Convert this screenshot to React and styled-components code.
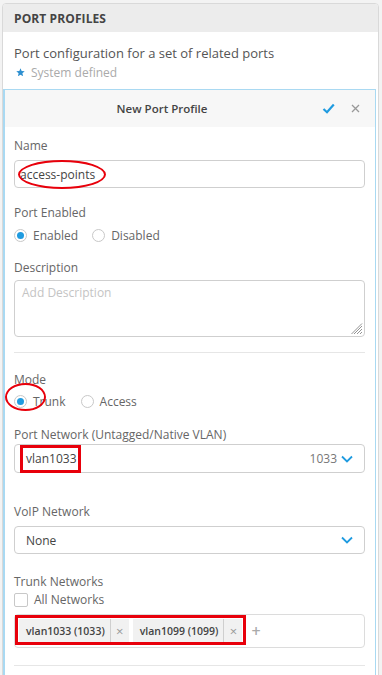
import React from 'react';
import styled, { createGlobalStyle } from 'styled-components';

const Global = createGlobalStyle`
  body {
    margin: 0;
    background: #f3f3f3;
    font-family: 'Open Sans', 'Liberation Sans', sans-serif;
  }
`;

const Frame = styled.div`
  margin: 3px 3px 0 2px;
  height: 672px;
  background: #fff;
  border: 1px solid #d9d9d9;
  border-radius: 4px 4px 0 0;
  overflow: hidden;
  display: flex;
  flex-direction: column;
`;

const Header = styled.div`
  background: #ececec;
  height: 28px;
  display: flex;
  align-items: center;
  padding-left: 11px;
  font-size: 12px;
  font-weight: 700;
  color: #444;
  letter-spacing: 0.1px;
`;

const Intro = styled.div`
  padding: 12px 11px 8px;
  display: flex;
  flex-direction: column;
  gap: 2px;
`;

const IntroText = styled.div`
  font-size: 13px;
  color: #555;
  line-height: 18px;
`;

const SystemNote = styled.div`
  display: flex;
  align-items: center;
  gap: 6px;
  font-size: 12px;
  color: #aaa;
  line-height: 17px;
  padding-left: 2px;
`;

const Panel = styled.div`
  flex: 1;
  margin-right: 2px;
  border: 1px solid #a9d9f2;
  border-bottom: none;
  border-left-width: 2px;
  display: flex;
  flex-direction: column;
`;

const PanelBar = styled.div`
  height: 37px;
  background: #f7f7f7;
  display: flex;
  align-items: center;
`;

const PanelTitle = styled.div`
  flex: 1;
  text-align: center;
  font-size: 11.5px;
  font-weight: 600;
  color: #444;
`;

const BarIcons = styled.div`
  width: 56px;
  display: flex;
  align-items: center;
  gap: 16px;
  padding-left: 3px;
  box-sizing: border-box;
`;

const Form = styled.div`
  padding: 10px 10px 0 9px;
  display: flex;
  flex-direction: column;
`;

const Field = styled.div`
  display: flex;
  flex-direction: column;
  margin-bottom: ${p => p.$mb || 16}px;
`;

const Label = styled.div`
  font-size: 12px;
  color: #666;
  line-height: 17px;
  margin-bottom: ${p => p.$mb || 0}px;
`;

const Box = styled.div`
  position: relative;
  height: ${p => p.$h || 28}px;
  border: 1px solid #cfcfcf;
  border-radius: 4px;
  box-sizing: border-box;
  display: flex;
  align-items: center;
  padding: 0 11px 0 ${p => p.$pl || 5}px;
  font-size: 12px;
  color: #444;
  background: #fff;
`;

const TextArea = styled.div`
  position: relative;
  height: 57px;
  border: 1px solid #cfcfcf;
  border-radius: 4px;
  box-sizing: border-box;
  padding: 3px 7px;
  font-size: 12px;
  color: #c4c4c4;
`;

const Grip = styled.svg`
  position: absolute;
  right: 1px;
  bottom: 1px;
`;

const Value = styled.span`
  position: relative;
  flex: 1;
  line-height: 17px;
`;

const Extra = styled.span`
  color: #777;
  margin-right: 4px;
`;

const RadioRow = styled.div`
  display: flex;
  align-items: center;
  gap: ${p => p.$gap || 14}px;
  height: 18px;
`;

const RadioOption = styled.label`
  position: relative;
  display: flex;
  align-items: center;
  gap: 6px;
  font-size: 12px;
  color: #666;
`;

const RadioDot = styled.span`
  width: 13px;
  height: 13px;
  border-radius: 50%;
  border: 1px solid #c8c8c8;
  box-sizing: border-box;
  display: flex;
  align-items: center;
  justify-content: center;
  background: #fff;
  &::after {
    content: '';
    width: 7px;
    height: 7px;
    border-radius: 50%;
    background: ${p => (p.$on ? '#1f9be0' : 'transparent')};
  }
`;

const Divider = styled.div`
  height: 1px;
  background: #e6e6e6;
  margin: ${p => p.$m || '0'};
`;

const CheckRow = styled.label`
  display: flex;
  align-items: center;
  gap: 6px;
  font-size: 12px;
  line-height: 17px;
  color: #666;
  margin: 1px 0 6px;
`;

const CheckBox = styled.span`
  width: 14px;
  height: 14px;
  border: 1px solid #c8c8c8;
  border-radius: 2px;
  box-sizing: border-box;
  background: #fff;
`;

const TagBox = styled.div`
  height: 34px;
  border: 1px solid #dcdcdc;
  border-radius: 4px;
  box-sizing: border-box;
  display: flex;
  align-items: center;
  padding-left: 4px;
  gap: 4px;
`;

const TagGroup = styled.div`
  position: relative;
  display: flex;
  align-items: center;
  gap: 4px;
`;

const Tag = styled.div`
  display: flex;
  align-items: stretch;
  height: 24px;
  background: #f1f1f1;
  font-size: 10.5px;
  color: #444;
  font-weight: 600;
`;

const TagText = styled.span`
  display: flex;
  align-items: center;
  padding: 0 5px 0 7px;
  border-right: 1px solid #cfcfcf;
`;

const TagX = styled.span`
  display: flex;
  align-items: center;
  justify-content: center;
  width: 18px;
  color: #999;
  font-size: 13px;
  font-weight: 400;
`;

const Plus = styled.span`
  color: #aaa;
  font-size: 16px;
  margin-left: 5px;
  font-weight: 600;
`;

const RedEllipse = styled.span`
  position: absolute;
  box-sizing: border-box;
  border: 2.5px solid #e8000b;
  border-radius: 50%;
  left: ${p => p.$l}px;
  top: ${p => p.$t}px;
  width: ${p => p.$w}px;
  height: ${p => p.$h}px;
  pointer-events: none;
`;

const RedRect = styled.span`
  position: absolute;
  box-sizing: border-box;
  border: 3px solid #e8000b;
  left: ${p => p.$l}px;
  top: ${p => p.$t}px;
  right: ${p => (p.$r !== undefined ? `${p.$r}px` : 'auto')};
  bottom: ${p => (p.$b !== undefined ? `${p.$b}px` : 'auto')};
  width: ${p => (p.$w ? `${p.$w}px` : 'auto')};
  height: ${p => (p.$h ? `${p.$h}px` : 'auto')};
  pointer-events: none;
`;

const Chevron = () => (
  <svg width="12" height="8" viewBox="0 0 12 8">
    <path d="M1 1.5 L6 6.5 L11 1.5" fill="none" stroke="#1f9be0" strokeWidth="1.8" />
  </svg>
);

const Radio = ({ on, children, mark }) => (
  <RadioOption>
    <RadioDot $on={on} />
    {children}
    {mark}
  </RadioOption>
);

const Chip = ({ text }) => (
  <Tag>
    <TagText>{text}</TagText>
    <TagX>×</TagX>
  </Tag>
);

export default function App() {
  return (
    <>
      <Global />
      <Frame>
        <Header>PORT PROFILES</Header>
        <Intro>
          <IntroText>Port configuration for a set of related ports</IntroText>
          <SystemNote>
            <svg width="9" height="9" viewBox="0 0 10 10">
              <path d="M5 0.3 L6.3 3.4 L9.7 3.6 L7.1 5.8 L7.9 9.2 L5 7.4 L2.1 9.2 L2.9 5.8 L0.3 3.6 L3.7 3.4 Z" fill="#2d8fd0" />
            </svg>
            System defined
          </SystemNote>
        </Intro>
        <Panel>
          <PanelBar>
            <PanelTitle>New Port Profile</PanelTitle>
            <BarIcons>
              <svg width="13" height="11" viewBox="0 0 13 11">
                <path d="M1.5 6 L5 9.2 L11.8 1.5" fill="none" stroke="#1f9be0" strokeWidth="2.2" />
              </svg>
              <svg width="9" height="9" viewBox="0 0 9 9">
                <path d="M1 1 L8 8 M8 1 L1 8" stroke="#999" strokeWidth="1.3" />
              </svg>
            </BarIcons>
          </PanelBar>
          <Form>
            <Field $mb={16}>
              <Label $mb={6}>Name</Label>
              <Box>
                <Value>
                  access-points
                  <RedEllipse $l={-2} $t={-6} $w={88} $h={29} />
                </Value>
              </Box>
            </Field>
            <Field $mb={15}>
              <Label $mb={5}>Port Enabled</Label>
              <RadioRow $gap={14}>
                <Radio on>Enabled</Radio>
                <Radio>Disabled</Radio>
              </RadioRow>
            </Field>
            <Field $mb={15}>
              <Label $mb={4}>Description</Label>
              <TextArea>
                Add Description
                <Grip width="12" height="12" viewBox="0 0 12 12">
                  <path d="M11 3 L3 11 M11 6 L6 11 M11 9 L9 11 M11 0.5 L0.5 11" stroke="#888" strokeWidth="0.9" />
                </Grip>
              </TextArea>
            </Field>
            <Divider $m="0 0 18px" />
            <Field $mb={16}>
              <Label $mb={4}>Mode</Label>
              <RadioRow $gap={15}>
                <Radio on mark={<RedEllipse $l={-9} $t={-10} $w={41} $h={28} />}>Trunk</Radio>
                <Radio>Access</Radio>
              </RadioRow>
            </Field>
            <Field $mb={30}>
              <Label $mb={1}>Port Network (Untagged/Native VLAN)</Label>
              <Box $h={29} $pl={11}>
                <Value>
                  vlan1033
                  <RedRect $l={-6} $t={-5} $w={61} $h={28} />
                </Value>
                <Extra>1033</Extra>
                <Chevron />
              </Box>
            </Field>
            <Field $mb={19}>
              <Label $mb={6}>VoIP Network</Label>
              <Box $h={28} $pl={11}>
                <Value>None</Value>
                <Chevron />
              </Box>
            </Field>
            <Field $mb={17}>
              <Label>Trunk Networks</Label>
              <CheckRow>
                <CheckBox />
                All Networks
              </CheckRow>
              <TagBox>
                <TagGroup>
                  <Chip text="vlan1033 (1033)" />
                  <Chip text="vlan1099 (1099)" />
                  <RedRect $l={-4} $t={-4} $r={-4} $b={-2} />
                </TagGroup>
                <Plus>+</Plus>
              </TagBox>
            </Field>
            <Divider />
          </Form>
        </Panel>
      </Frame>
    </>
  );
}
